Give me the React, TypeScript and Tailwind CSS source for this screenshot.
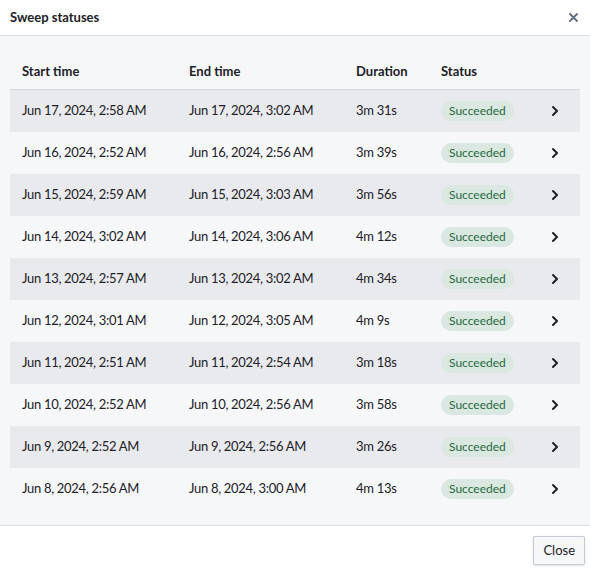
import React from "react";

const runs = [
  ["Jun 17, 2024, 2:58 AM", "Jun 17, 2024, 3:02 AM", "3m 31s"],
  ["Jun 16, 2024, 2:52 AM", "Jun 16, 2024, 2:56 AM", "3m 39s"],
  ["Jun 15, 2024, 2:59 AM", "Jun 15, 2024, 3:03 AM", "3m 56s"],
  ["Jun 14, 2024, 3:02 AM", "Jun 14, 2024, 3:06 AM", "4m 12s"],
  ["Jun 13, 2024, 2:57 AM", "Jun 13, 2024, 3:02 AM", "4m 34s"],
  ["Jun 12, 2024, 3:01 AM", "Jun 12, 2024, 3:05 AM", "4m 9s"],
  ["Jun 11, 2024, 2:51 AM", "Jun 11, 2024, 2:54 AM", "3m 18s"],
  ["Jun 10, 2024, 2:52 AM", "Jun 10, 2024, 2:56 AM", "3m 58s"],
  ["Jun 9, 2024, 2:52 AM", "Jun 9, 2024, 2:56 AM", "3m 26s"],
  ["Jun 8, 2024, 2:56 AM", "Jun 8, 2024, 3:00 AM", "4m 13s"],
];

export default function App() {
  return (
    <div className="w-[590px] h-[573px] bg-white flex flex-col font-['Lato','Liberation_Sans',sans-serif] text-[13px] text-[#1c2127]">
      {/* Header */}
      <div className="h-[36px] shrink-0 flex items-center justify-between pl-[10px] pr-[12px] border-b border-[#dcdee2]">
        <span className="font-bold text-[13px]">Sweep statuses</span>
        <svg width="9" height="9" viewBox="0 0 9 9" className="text-[#5f6b7c]">
          <path d="M1 1L8 8M8 1L1 8" stroke="currentColor" strokeWidth="1.8" strokeLinecap="round" />
        </svg>
      </div>

      {/* Body */}
      <div className="flex-1 bg-[#f6f7f9] px-[10px] pt-[18px] pb-[15px] border-b border-[#dcdee2]">
        <div className="h-[36px] flex items-center pl-[12px] font-bold border-b border-[#d3d6db]">
          <div className="w-[167px]">Start time</div>
          <div className="w-[167px]">End time</div>
          <div className="w-[85px]">Duration</div>
          <div>Status</div>
        </div>
        {runs.map((r, i) => (
          <div
            key={i}
            className={`h-[42px] flex items-center pl-[12px] tracking-[-0.3px] ${i % 2 === 0 ? "bg-[#e9eaee]" : ""}`}
          >
            <div className="w-[167px]">{r[0]}</div>
            <div className="w-[167px]">{r[1]}</div>
            <div className="w-[85px]">{r[2]}</div>
            <div className="w-[110px]">
              <span className="inline-flex items-center h-[20px] px-[8px] rounded-full bg-[#dbe7e1] text-[#1f6b3e] text-[12px] tracking-normal">
                Succeeded
              </span>
            </div>
            <svg width="8" height="12" viewBox="0 0 8 12" className="text-[#1c2127]">
              <path d="M2 2L6 6L2 10" fill="none" stroke="currentColor" strokeWidth="2" strokeLinecap="round" strokeLinejoin="round" />
            </svg>
          </div>
        ))}
      </div>

      {/* Footer */}
      <div className="h-[47px] shrink-0 flex items-start justify-end pt-[10px] pr-[5px]">
        <button className="h-[29px] px-[9px] bg-[#f6f7f9] border border-[#c5cbd3] rounded-[2px] text-[13px] text-[#1c2127] shadow-sm">
          Close
        </button>
      </div>
    </div>
  );
}
